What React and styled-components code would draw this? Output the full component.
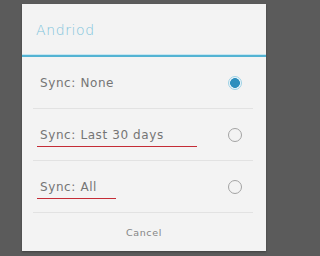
import React from 'react';
import styled, { createGlobalStyle } from 'styled-components';

const Global = createGlobalStyle`
  html, body {
    margin: 0;
    padding: 0;
    background: #5b5b5b;
  }
  body {
    width: 288px;
    height: 256px;
    overflow: hidden;
    font-family: "DejaVu Sans", "Liberation Sans", sans-serif;
  }
`;

const options = [
  { label: 'Sync: None', checked: true },
  { label: 'Sync: Last 30 days', mark: 160 },
  { label: 'Sync: All', mark: 79 },
];

const App = () => {
  return (
    <>
      <Global />
      <Screen>
        <Dialog>
          <Header>Andriod</Header>
          <List>
            {options.map((o) => (
              <Row key={o.label}>
                <Label>
                  <span>{o.label}</span>
                  {o.mark && <Mark $width={o.mark} />}
                </Label>
                <Radio $checked={o.checked} />
              </Row>
            ))}
          </List>
          <Footer>
            <Cancel>Cancel</Cancel>
          </Footer>
        </Dialog>
      </Screen>
    </>
  );
};

export default App;

const Screen = styled.div`
  width: 288px;
  height: 256px;
  padding: 4px 0 0 22px;
  box-sizing: border-box;
`;
const Dialog = styled.div`
  width: 244px;
  height: 247px;
  background: #f3f3f3;
  display: flex;
  flex-direction: column;
  box-shadow: 0 1px 2px rgba(0, 0, 0, 0.3);
`;
const Header = styled.div`
  height: 51px;
  display: flex;
  align-items: center;
  padding-left: 14px;
  font-size: 14px;
  font-weight: 300;
  letter-spacing: 0.6px;
  color: #7fc4dc;
  border-bottom: 2px solid #53b3d3;
  box-shadow: 0 -1px 0 #c6e6f1 inset;
`;
const List = styled.div`
  display: flex;
  flex-direction: column;
  padding: 0 13px 0 11px;
`;
const Row = styled.div`
  height: 51px;
  display: flex;
  align-items: center;
  justify-content: space-between;
  padding: 0 11px 0 7px;
  border-bottom: 1px solid #e2e2e2;
`;
const Label = styled.div`
  position: relative;
  font-size: 12px;
  letter-spacing: 0.6px;
  color: #757575;
`;
const Mark = styled.div`
  position: absolute;
  left: -3px;
  top: 18px;
  width: ${(p) => p.$width}px;
  height: 1px;
  background: #c42c36;
`;
const Radio = styled.div`
  width: 14px;
  height: 14px;
  border-radius: 50%;
  box-sizing: border-box;
  border: 1px solid ${(p) => (p.$checked ? '#9fd2e6' : '#a3a3a3')};
  background: ${(p) =>
    p.$checked ? 'radial-gradient(circle, #2d8fbe 0 4.6px, #eaf5fa 5.2px)' : 'transparent'};
`;
const Footer = styled.div`
  flex: 1;
  display: flex;
  align-items: center;
  justify-content: center;
`;
const Cancel = styled.span`
  font-size: 9.5px;
  letter-spacing: 0.6px;
  color: #858585;
`;
